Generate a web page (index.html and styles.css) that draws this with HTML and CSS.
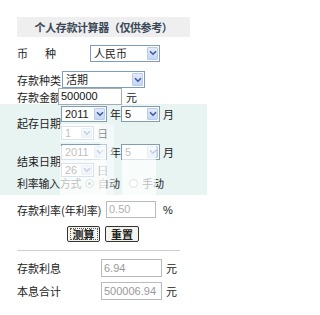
FILE: index.html
```html
<!DOCTYPE html>
<html lang="zh">
<head>
<meta charset="utf-8">
<title>个人存款计算器</title>
<link rel="stylesheet" href="styles.css">
</head>
<body>
<div class="page">
  <div class="title">个人存款计算器（仅供参考）</div>

  <div class="row r1">
    <span class="lbl l1"><span>币</span><span class="zhong">种</span></span>
    <div class="sel s-cur"><span class="val">人民币</span><span class="arr"><svg viewBox="0 0 8 6" width="8" height="6"><path d="M1 1.2 L4 4.2 L7 1.2" fill="none" stroke="#3e5c9a" stroke-width="1.6"/></svg></span></div>
  </div>

  <div class="row r2">
    <span class="lbl l2">存款种类</span>
    <div class="sel s-type"><span class="val">活期</span><span class="arr"><svg viewBox="0 0 8 6" width="8" height="6"><path d="M1 1.2 L4 4.2 L7 1.2" fill="none" stroke="#3e5c9a" stroke-width="1.6"/></svg></span></div>
  </div>

  <div class="row r3">
    <span class="lbl l3">存款金额</span>
    <div class="inp i-amt">500000</div>
    <span class="unit">元</span>
  </div>

  <div class="band">
    <div class="date">
      <span class="lbl l4">起存日期</span>
      <div class="dcol">
        <div class="dline">
          <div class="sel s-year"><span class="val">2011</span><span class="arr"><svg viewBox="0 0 8 6" width="8" height="6"><path d="M1 1.2 L4 4.2 L7 1.2" fill="none" stroke="#3e5c9a" stroke-width="1.6"/></svg></span></div>
          <span class="du">年</span>
          <div class="sel s-mon"><span class="val">5</span><span class="arr"><svg viewBox="0 0 8 6" width="8" height="6"><path d="M1 1.2 L4 4.2 L7 1.2" fill="none" stroke="#3e5c9a" stroke-width="1.6"/></svg></span></div>
          <span class="du">月</span>
        </div>
        <div class="dline d2">
          <div class="sel s-day"><span class="val">1</span><span class="arr"><svg viewBox="0 0 8 6" width="8" height="6"><path d="M1 1.2 L4 4.2 L7 1.2" fill="none" stroke="#3e5c9a" stroke-width="1.6"/></svg></span></div>
          <span class="du">日</span>
        </div>
      </div>
    </div>

    <div class="date dt2">
      <span class="lbl l4">结束日期</span>
      <div class="dcol">
        <div class="dline">
          <div class="sel s-year"><span class="val">2011</span><span class="arr"><svg viewBox="0 0 8 6" width="8" height="6"><path d="M1 1.2 L4 4.2 L7 1.2" fill="none" stroke="#3e5c9a" stroke-width="1.6"/></svg></span></div>
          <span class="du">年</span>
          <div class="sel s-mon"><span class="val">5</span><span class="arr"><svg viewBox="0 0 8 6" width="8" height="6"><path d="M1 1.2 L4 4.2 L7 1.2" fill="none" stroke="#3e5c9a" stroke-width="1.6"/></svg></span></div>
          <span class="du">月</span>
        </div>
        <div class="dline d2">
          <div class="sel s-day"><span class="val">26</span><span class="arr"><svg viewBox="0 0 8 6" width="8" height="6"><path d="M1 1.2 L4 4.2 L7 1.2" fill="none" stroke="#3e5c9a" stroke-width="1.6"/></svg></span></div>
          <span class="du">日</span>
        </div>
      </div>
    </div>

    <div class="row r6">
      <span class="lbl l6">利率输入方式</span>
      <span class="radio on"></span><span class="rt">自动</span>
      <span class="radio"></span><span class="rt">手动</span>
    </div>
  </div>

  <div class="row r7">
    <span class="lbl l7">存款利率(年利率)</span>
    <div class="inp i-rate">0.50</div>
    <span class="unit pct">%</span>
  </div>

  <div class="btns">
    <button class="btn b1"><span>测算</span></button>
    <button class="btn b2">重置</button>
  </div>

  <div class="hr"></div>

  <div class="row r8">
    <span class="lbl l8">存款利息</span>
    <div class="inp i-res">6.94</div>
    <span class="unit">元</span>
  </div>
  <div class="row r9">
    <span class="lbl l8">本息合计</span>
    <div class="inp i-res">500006.94</div>
    <span class="unit">元</span>
  </div>

  <div class="wm w1"></div>
  <div class="wm w2"></div>
  <div class="wm w3"></div>
  <div class="wm w4"></div>
</div>
</body>
</html>
```

FILE: styles.css
```css
html, body {
  margin: 0;
  padding: 0;
  background: #ffffff;
}
body {
  font-family: "Noto Sans CJK SC", "Liberation Sans", sans-serif;
  font-size: 11px;
  color: #222222;
}
.page {
  position: relative;
  width: 207px;
  height: 315px;
  padding-top: 17px;
  box-sizing: border-box;
  overflow: hidden;
}
.title {
  margin-left: 17px;
  width: 173px;
  height: 20px;
  line-height: 20px;
  background: #efefef;
  text-align: center;
  font-weight: bold;
  color: #3a4858;
  font-size: 11px;
  letter-spacing: -0.4px;
}
.row {
  display: flex;
  align-items: center;
  padding-left: 17px;
}
.lbl {
  flex: none;
  line-height: 12px;
  white-space: nowrap;
}
.l1 { width: 73px; display: flex; }
.zhong { margin-left: 17px; }
.l2 { width: 45px; }
.l3 { width: 41px; }
.l4 { width: 44px; }
.l6 { width: 66px; letter-spacing: -0.3px; }
.l7 { width: 89px; }
.l8 { width: 84px; }

.r1 { margin-top: 7px; height: 18px; }
.r2 { margin-top: 9px; height: 17px; }
.r3 { height: 17px; }

.sel {
  display: flex;
  align-items: stretch;
  box-sizing: border-box;
  border: 1px solid #7f9db9;
  background: #ffffff;
  padding: 1px;
}
.sel .val {
  flex: 1;
  padding-left: 2px;
  line-height: 13px;
  font-family: "Liberation Sans", "Noto Sans CJK SC", sans-serif;
}
.s-cur .val, .s-type .val { font-family: "Noto Sans CJK SC", sans-serif; }
.sel .arr {
  flex: none;
  width: 11px;
  box-sizing: border-box;
  border: 1px solid #b9cbef;
  border-radius: 1px;
  background: linear-gradient(#e3ebfb, #c5d5f5);
  display: flex;
  align-items: center;
  justify-content: center;
}
.s-cur { width: 70px; height: 17px; }
.s-type { width: 83px; height: 17px; }
.s-year { width: 46px; height: 16px; }
.s-mon { width: 39px; height: 16px; }
.s-day { width: 33px; height: 14px; }
.s-day .val { line-height: 11px; }

.inp {
  box-sizing: border-box;
  border: 1px solid #a5acb2;
  background: #ffffff;
  height: 17px;
  line-height: 15px;
  padding-left: 2px;
  font-family: "Liberation Sans", sans-serif;
  font-size: 11px;
}
.i-amt { width: 64px; color: #111; }
.unit { margin-left: 4px; line-height: 12px; }
.pct { margin-left: 7px; font-family: "Liberation Sans", sans-serif; }
.i-rate { width: 50px; color: #b0b0b0; border-color: #b8bcc0; }
.i-res { width: 61px; height: 18px; line-height: 16px; color: #9a9a9a; border-color: #b8bcc0; }

.band {
  margin-top: -1px;
  background: #e8f4f2;
  padding-top: 2px;
  padding-bottom: 6px;
}
.date {
  display: flex;
  align-items: center;
  padding-left: 17px;
}
.dt2 { margin-top: 4px; }
.dcol {
  display: flex;
  flex-direction: column;
}
.dline {
  display: flex;
  align-items: center;
}
.d2 { margin-top: 4px; }
.dt2 .d2 { margin-top: 3px; }
.du { margin: 0 3px 0 3px; width: 8px; line-height: 11px; }

.r6 { height: 12px; }
.radio {
  width: 9px;
  height: 9px;
  box-sizing: border-box;
  border: 1px solid #8a9aa8;
  border-radius: 50%;
  background: #fff;
  margin: 0 4px 0 2px;
  position: relative;
}
.radio.on::after {
  content: "";
  position: absolute;
  left: 2px;
  top: 2px;
  width: 3px;
  height: 3px;
  border-radius: 50%;
  background: #3a9a3a;
}
.rt { margin-right: 7px; line-height: 11px; }

.r7 { margin-top: 6px; height: 17px; }

.btns {
  display: flex;
  gap: 5px;
  padding-left: 67px;
  margin-top: 8px;
}
.btn {
  box-sizing: border-box;
  height: 16px;
  padding: 0;
  border: 1px solid #333;
  border-radius: 2px;
  background: #f4f4ee;
  font-family: "Noto Sans CJK SC", sans-serif;
  font-size: 11px;
  font-weight: bold;
  color: #222;
  line-height: 12px;
}
.b1 { width: 33px; }
.b1 span {
  display: inline-block;
  border: 1px dotted #555;
  padding: 0 2px;
  line-height: 10px;
}
.b2 { width: 34px; }

.hr {
  margin: 8px 27px 0 17px;
  height: 1px;
  background: #d0d0d0;
}
.r8 { margin-top: 8px; height: 18px; }
.r9 { margin-top: 5px; height: 18px; }

.wm {
  position: absolute;
  background: rgba(255, 255, 255, 0.7);
}
.w1 { left: 60px; top: 124px; width: 40px; height: 18px; }
.w2 { left: 60px; top: 146px; width: 46px; height: 50px; }
.w3 { left: 122px; top: 146px; width: 34px; height: 50px; }
.w4 { left: 100px; top: 124px; width: 14px; height: 72px; background: rgba(255,255,255,0.45); }
```
